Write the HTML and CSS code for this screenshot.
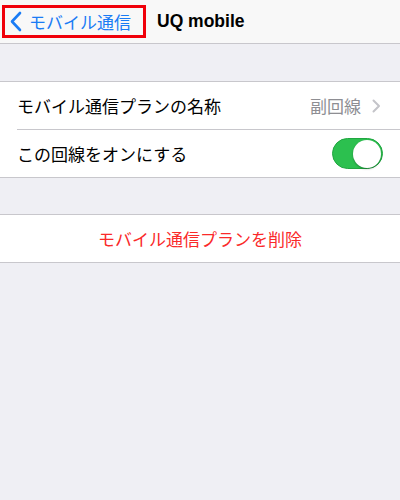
FILE: index.html
```html
<!DOCTYPE html>
<html lang="ja">
<head>
    <meta charset="UTF-8">
    <meta name="viewport" content="width=device-width, initial-scale=1.0">
    <title>UQ mobile</title>
    <link rel="stylesheet" href="styles.css">
</head>
<body>
    <div class="nav-bar">
        <div class="back-box">
            <svg class="back-icon" width="12" height="21" viewBox="0 0 12 21">
                <path d="M10 2 L2 10.5 L10 19" fill="none" stroke="#1a7cf5" stroke-width="2.6" stroke-linecap="round" stroke-linejoin="round"/>
            </svg>
            <span class="back-label">モバイル通信</span>
        </div>
        <div class="nav-title">UQ mobile</div>
    </div>

    <div class="group first">
        <div class="row">
            <span class="row-label">モバイル通信プランの名称</span>
            <span class="row-value">副回線</span>
            <svg class="chevron" width="9" height="14" viewBox="0 0 9 14">
                <path d="M1.5 1.5 L7 7 L1.5 12.5" fill="none" stroke="#c4c4c9" stroke-width="2" stroke-linecap="round" stroke-linejoin="round"/>
            </svg>
        </div>
        <div class="row">
            <span class="row-label">この回線をオンにする</span>
            <div class="switch"><div class="knob"></div></div>
        </div>
    </div>

    <div class="group">
        <div class="row center">
            <span class="delete">モバイル通信プランを削除</span>
        </div>
    </div>
</body>
</html>
```

FILE: styles.css
```css
body {
    margin: 0;
    background: #efeff4;
    font-family: "Noto Sans CJK JP", "Liberation Sans", sans-serif;
    color: #000;
}

.nav-bar {
    height: 43px;
    background: #f8f8f8;
    border-bottom: 1px solid #c8c7cc;
    display: flex;
    align-items: center;
    padding-left: 2px;
}

.back-box {
    display: flex;
    align-items: center;
    height: 27px;
    width: 133px;
    border: 3px solid #f0000a;
    padding-left: 5px;
    box-sizing: content-box;
}

.back-icon {
    margin-right: 7px;
}

.back-label {
    color: #1a7cf5;
    font-size: 17px;
}

.nav-title {
    margin-left: 11px;
    font-family: "Liberation Sans", sans-serif;
    font-weight: bold;
    font-size: 17.5px;
}

.group {
    background: #fff;
    border-top: 1px solid #c8c7cc;
    border-bottom: 1px solid #c8c7cc;
    margin-top: 36px;
}

.group.first {
    margin-top: 37px;
}

.row {
    height: 47px;
    display: flex;
    align-items: center;
    margin-left: 17px;
    padding-right: 17px;
    border-bottom: 1px solid #c8c7cc;
}

.row:last-child {
    border-bottom: none;
}

.row-label {
    font-size: 17px;
    flex: 1;
}

.row-value {
    font-size: 17px;
    color: #8e8e93;
    margin-right: 11px;
}

.chevron {
    margin-right: 2px;
}

.switch {
    width: 51px;
    height: 31px;
    border-radius: 16px;
    background: #2cc04f;
    border: 1px solid #20a740;
    box-sizing: border-box;
    display: flex;
    justify-content: flex-end;
    align-items: center;
    padding-right: 1px;
}

.knob {
    width: 28px;
    height: 28px;
    border-radius: 50%;
    background: #fff;
    box-shadow: 0 1px 2px rgba(0, 0, 0, 0.3);
}

.row.center {
    justify-content: center;
    margin-left: 0;
    padding-right: 0;
}

.delete {
    color: #fa2a2a;
    font-size: 17px;
}
```
